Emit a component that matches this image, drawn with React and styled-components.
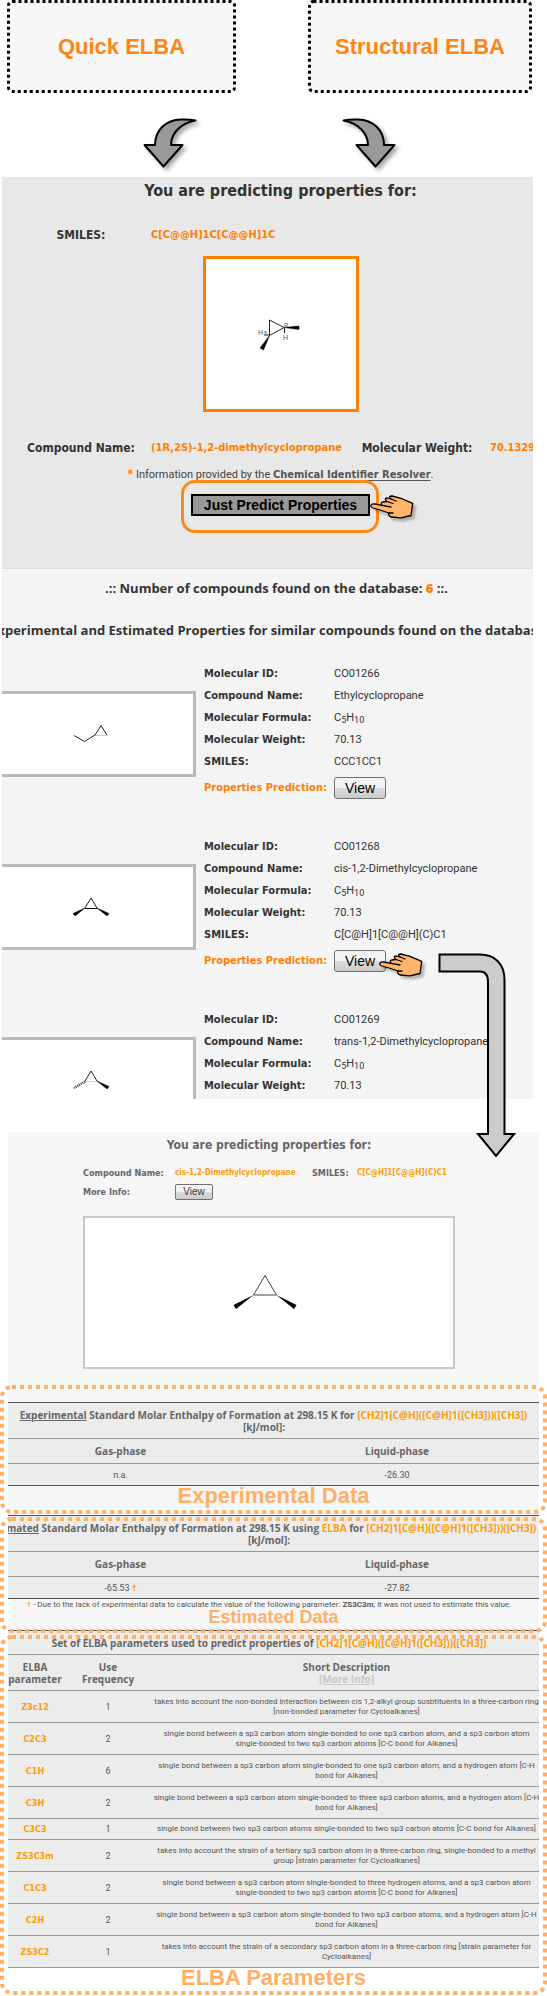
import React from 'react';
import styled, { createGlobalStyle, css } from 'styled-components';

const GlobalStyle = createGlobalStyle`
  *, *::before, *::after { box-sizing: border-box; }
  body { margin: 0; background: #fff; }
  h1, h2, h3, p, dl, dd { margin: 0; }
`;

const label = '"DejaVu Sans Condensed", Tahoma, sans-serif';
const value = 'Roboto, Tahoma, sans-serif';
const heading = '"Open Sans", Tahoma, sans-serif';
const display = '"Liberation Sans", Arial, sans-serif';
const orange = '#ff7f00';
const amber = '#ff9c05';
const peach = '#ffb066';

const Page = styled.main`
  display: flex;
  flex-direction: column;
  width: 100%;
  overflow: hidden;
  padding-bottom: 1px;
`;

/* Entry points */

const Modes = styled.div`
  display: flex;
  gap: 72px;
  padding: 0 15px 0 7px;
`;

const ModeCard = styled.section`
  position: relative;
  flex: ${(p) => p.$grow} 1 0;
  display: flex;
  align-items: center;
  justify-content: center;
  height: 93px;
  background: #f7f7f7;
  border-radius: 5px;
`;

const ModeTitle = styled.h1`
  font: bold 22px/26px ${display};
  color: #ff8512;
`;

const FrameLayer = styled.span`
  position: absolute;
  z-index: 1;
  inset: ${(p) => p.$inset || '0'};
  pointer-events: none;

  svg {
    display: block;
    width: 100%;
    height: 100%;
    overflow: visible;
  }

  rect {
    x: ${(p) => p.$stroke / 2}px;
    y: ${(p) => p.$stroke / 2}px;
    width: calc(100% - ${(p) => p.$stroke}px);
    height: calc(100% - ${(p) => p.$stroke}px);
    rx: ${(p) => p.$radius}px;
    fill: none;
    stroke: ${(p) => p.$color};
    stroke-width: ${(p) => p.$stroke}px;
    stroke-dasharray: ${(p) => p.$stroke} ${(p) => p.$stroke};
  }
`;

const DottedFrame = (props) => (
  <FrameLayer aria-hidden="true" {...props}>
    <svg>
      <rect />
    </svg>
  </FrameLayer>
);

const ArrowRow = styled.div`
  display: flex;
  justify-content: center;
  gap: 135px;
  padding: 23px 8px 7px 0;
`;

const CurvedArrowSvg = styled.svg`
  width: 62px;
  height: 54px;
  filter: drop-shadow(3px 3px 2px rgba(0, 0, 0, 0.35));
  path {
    fill: #999;
    stroke: #000;
    stroke-width: 2px;
    stroke-linejoin: round;
  }
`;

const CurvedArrow = ({ mirrored }) => (
  <CurvedArrowSvg viewBox="0 0 62 54" aria-hidden="true">
    <path
      transform={mirrored ? 'translate(62 0) scale(-1 1)' : undefined}
      d="M15 29 C15 14 26 4 41 3.500 Q49 3.200 55.500 4.500 C41 7 31 17 31 29 H42.500 L23.500 50.500 L4.500 29 Z"
    />
  </CurvedArrowSvg>
);

/* Query panel */

const QueryPanel = styled.section`
  margin: 0 14px 0 2px;
  overflow: hidden;
  background: #e8e8e8;
  border-bottom: 1px solid #dcdcdc;
`;

const QueryBody = styled.div`
  display: flex;
  flex-direction: column;
  align-items: center;
  width: calc(100% + 26px);
  padding: 4px 0 52px;
`;

const QueryTitle = styled.h2`
  font: bold 16px/20px ${label};
  color: #333;
`;

const QueryFacts = styled.dl`
  align-self: stretch;
  display: grid;
  grid-template-columns: 112px 193px 118px auto;
  column-gap: 14px;
  padding-left: 23px;
  margin-top: ${(p) => (p.$first ? 24 : 26)}px;
  font: bold 12px/20px ${label};
  white-space: nowrap;

  dt { text-align: center; color: #333; }
  dd { font-size: 11px; color: ${orange}; }
`;

const Structure = styled.figure`
  width: 156px;
  height: 156px;
  margin: 11px 0 0;
  border: 3px solid ${orange};
  background: #fff;
  svg { display: block; width: 100%; height: 100%; }
`;

const Source = styled.p`
  height: 20px;
  margin-top: 7px;
  font: 11px/20px ${value};
  color: #444;
  i { color: ${orange}; font: bold 12px/16px ${label}; }
  a { font: bold 11px/16px ${label}; color: #555; text-underline-offset: 2px; }
`;

const PredictBox = styled.div`
  position: relative;
  margin-top: 9px;
`;

const PredictButton = styled.button`
  display: block;
  width: 179px;
  height: 22px;
  padding: 0;
  border: 2px solid #000;
  background: #999;
  color: #000;
  font: bold 14px/18px ${display};
`;

const Highlight = styled.span`
  position: absolute;
  inset: -14px -9px -17px -10px;
  border: 3px solid #ff8716;
  border-radius: 14px;
  pointer-events: none;
`;

const HandSvg = styled.svg`
  position: absolute;
  left: ${(p) => p.$left}px;
  top: ${(p) => p.$top}px;
  width: 44px;
  height: 28px;
  overflow: visible;
  pointer-events: none;
  filter: drop-shadow(3px 3px 1px rgba(0, 0, 0, 0.25));
  path {
    fill: #ffb36b;
    stroke: #000;
    stroke-width: 1.3;
    stroke-linejoin: round;
    stroke-linecap: round;
  }
`;

const Hand = ({ left, top }) => (
  <HandSvg viewBox="0 0 44 28" $left={left} $top={top} aria-hidden="true">
    <path d="M1 12 Q2 10.500 5 11 L12 12.300 Q10 10 12.500 9 L17 8.500 Q13.500 5.500 17 4.800 L21 6 Q18 3 22 3 L31 5.300 L42.700 10.300 L41 22.500 L31 24.800 L21 24 Q17.500 22 19 20 L10 17 L3 15 Q0 14 1 12 Z" />
    <path d="M12 12.300 L21 14 M17 8.500 L23 10.500 M21 6 L26 8 M19 20 L23 20" />
  </HandSvg>
);

/* Matching compounds */

const Results = styled.section`
  margin: 0 14px 0 2px;
  padding-top: 9px;
  overflow: hidden;
  background: #f4f4f4;
`;

const ResultHeading = styled.h2`
  margin: 0 -40px ${(p) => p.$after}px ${(p) => (p.$wide ? -40 : -22)}px;
  font: bold 13px/20px ${heading};
  text-align: center;
  white-space: nowrap;
  color: #333;
  b { color: ${orange}; }
`;

const Compound = styled.article`
  display: flex;
  gap: 8px;
  height: 140px;
  margin-bottom: 33px;
  ${(p) => p.$cut && css`
    height: 90px;
    margin-bottom: 0;
    overflow: hidden;
  `}
`;

const Thumb = styled.figure`
  flex: none;
  width: 194px;
  height: 86px;
  margin: 28px 0 0;
  border: 3px solid #bababa;
  border-left: 0;
  background: #fff;
  svg { display: block; width: 100%; height: 100%; }
`;

const Facts = styled.dl`
  flex: 1;
  display: grid;
  grid-template-columns: 130px 1fr;
  grid-template-rows: repeat(5, 22px) 30px;
  align-items: center;
  font: 11px/22px ${value};
  white-space: nowrap;
  color: #333;
  dt { font: bold 11px/22px ${label}; }
  dt.prediction { color: ${orange}; }
  dd { position: relative; }
  sub { font-size: 9px; line-height: 0; vertical-align: -2px; }
`;

const ViewButton = styled.button`
  display: block;
  width: ${(p) => (p.$small ? 38 : 52)}px;
  height: ${(p) => (p.$small ? 16 : 22)}px;
  padding: 0;
  border: 1px solid #707070;
  border-radius: ${(p) => (p.$small ? 2 : 3)}px;
  background: linear-gradient(#f3f3f3 0 48%, #dcdcdc 52%, #cbcbcb);
  color: ${(p) => (p.$small ? '#333' : '#000')};
  font: ${(p) => (p.$small ? '10px/14px' : '14px/20px')} ${display};
`;

const bond = { fill: 'none', stroke: '#222', strokeWidth: 1 };

const Ethyl = () => (
  <svg viewBox="0 0 191 80" aria-hidden="true">
    <path {...bond} d="M72 41.500 L82.500 47.500 L93 41 L99 31.500 L105 41" />
    <path {...bond} stroke="#ccc" d="M93 41.500 H105" />
  </svg>
);

const Dimethyl = ({ hashed }) => (
  <svg viewBox="0 0 191 80" aria-hidden="true">
    <path {...bond} d="M83 41 L89 31 L95 41" />
    <path {...bond} stroke={hashed ? '#ccc' : '#000'} d="M83 41.500 H95" />
    <path d="M95 41 L105 49 L107 46.500 Z" stroke="#000" strokeWidth="0.5" />
    {hashed ? (
      <path d="M83 41.500 L72 48" stroke="#333" strokeWidth="2.500" strokeDasharray="1 1" />
    ) : (
      <path d="M83 41 L73 49 L71 46.500 Z" stroke="#000" strokeWidth="0.5" />
    )}
  </svg>
);

const compounds = [
  { id: 'CO01266', name: 'Ethylcyclopropane', smiles: 'CCC1CC1', art: <Ethyl /> },
  { id: 'CO01268', name: 'cis-1,2-Dimethylcyclopropane', smiles: 'C[C@H]1[C@@H](C)C1', art: <Dimethyl />, pointed: true },
  { id: 'CO01269', name: 'trans-1,2-Dimethylcyclopropane', art: <Dimethyl hashed />, cut: true },
];

/* Prediction report */

const Report = styled.section`
  position: relative;
  margin: 33px 8px 0;
`;

const ReportHead = styled.div`
  padding: 5px 9px 16px 0;
  background: #f6f6f6;
`;

const ReportTitle = styled.h2`
  font: bold 12px/16px ${label};
  text-align: center;
  color: #666;
`;

const ReportFacts = styled.dl`
  display: grid;
  grid-template-columns: 92px 137px 45px auto;
  grid-template-rows: 12px 16px;
  row-gap: 5px;
  align-items: center;
  margin: 14px 0 16px;
  padding-left: 75px;
  font: bold 9px/12px ${label};
  white-space: nowrap;
  color: #666;
  dd { font-size: 8px; color: ${amber}; }
`;

const ReportStructure = styled.figure`
  height: 153px;
  margin: 0 75px;
  border: 2px solid #c8c8c8;
  background: #fff;
  svg { display: block; width: 100%; height: 100%; }
`;

const FlowArrowSvg = styled.svg`
  position: absolute;
  top: -179px;
  right: 23px;
  width: 78px;
  height: 206px;
  path { fill: #ccc; stroke: #000; stroke-width: 2px; }
`;

const ReportSection = styled.section`
  position: relative;
  padding-top: ${(p) => p.$top || 0}px;
  padding-bottom: ${(p) => p.$bottom}px;
  background: ${(p) => (p.$plain ? '#fff' : '#f6f6f6')};
`;

const SectionName = styled.h3`
  font: bold ${(p) => (p.$small ? '18px/14px' : '22px/20px')} ${display};
  text-align: center;
  color: ${peach};
`;

const Grid = styled.table`
  width: 100%;
  table-layout: fixed;
  border-collapse: separate;
  border-spacing: 0;
  border-top: 1px solid #555;
  background: #ececec;
  color: #555;
  text-align: center;
  font: 8px/10px ${value};

  th, td {
    padding: 0;
    border-bottom: 1px solid #999;
    white-space: nowrap;
    overflow: hidden;
  }
  thead th { font: bold 10px/12px ${heading}; color: #666; }
  tbody th { font: bold 9px/10px ${label}; color: ${amber}; }
`;

const TitleCell = styled.th`
  height: ${(p) => p.$h}px;
`;

const HeadCell = styled.th`
  height: ${(p) => p.$h || 25}px;
  && { padding-left: ${(p) => p.$indent || 0}px; }
  a { color: #c8c8c8; }
`;

const ValueCell = styled.td`
  height: 22px;
  font-size: 9px;
  && { padding-left: ${(p) => p.$indent || 0}px; border-color: #555; }
  i { color: ${amber}; font-style: normal; }
`;

const DataCell = styled.td`
  height: ${(p) => (p.$single ? 21 : 32)}px;
  font-size: ${(p) => (p.$count ? 9 : 8)}px;
`;

const Line = styled.span`
  display: block;
  margin: 0 -30px;
  padding-right: ${(p) => p.$trail || 0}px;
  em { color: ${amber}; font-style: normal; }
`;

const Footnote = styled.p`
  height: 11px;
  padding: 1px 9px 0 0;
  font: 8px/10px ${value};
  text-align: center;
  white-space: nowrap;
  color: #555;
  i { color: ${amber}; font-style: normal; }
`;

const species = '[CH2]1[C@H]([C@H]1([CH3]))([CH3])';

const EnthalpyTable = ({ children, unitTrail, gas, liquid }) => (
  <Grid>
    <colgroup>
      <col width="225" />
      <col />
    </colgroup>
    <thead>
      <tr>
        <TitleCell colSpan="2" $h={36}>
          {children}
          <Line $trail={unitTrail}>[kJ/mol]:</Line>
        </TitleCell>
      </tr>
      <tr>
        <HeadCell>Gas-phase</HeadCell>
        <HeadCell $indent={22}>Liquid-phase</HeadCell>
      </tr>
    </thead>
    <tbody>
      <tr>
        <ValueCell>{gas}</ValueCell>
        <ValueCell $indent={22}>{liquid}</ValueCell>
      </tr>
    </tbody>
  </Grid>
);

const parameters = [
  ['Z3c12', 1, 'takes into account the non-bonded interaction between cis 1,2-alkyl group susbtituents in a three-carbon ring', '[non-bonded parameter for Cycloalkanes]'],
  ['C2C3', 2, 'single bond between a sp3 carbon atom single-bonded to one sp3 carbon atom, and a sp3 carbon atom', 'single-bonded to two sp3 carbon atoms [C-C bond for Alkanes]'],
  ['C1H', 6, 'single bond between a sp3 carbon atom single-bonded to one sp3 carbon atom, and a hydrogen atom [C-H', 'bond for Alkanes]'],
  ['C3H', 2, 'single bond between a sp3 carbon atom single-bonded to three sp3 carbon atoms, and a hydrogen atom [C-H', 'bond for Alkanes]'],
  ['C3C3', 1, 'single bond between two sp3 carbon atoms single-bonded to two sp3 carbon atoms [C-C bond for Alkanes]'],
  ['ZS3C3m', 2, 'takes into account the strain of a tertiary sp3 carbon atom in a three-carbon ring, single-bonded to a methyl', 'group [strain parameter for Cycloalkanes]'],
  ['C1C3', 2, 'single bond between a sp3 carbon atom single-bonded to three hydrogen atoms, and a sp3 carbon atom', 'single-bonded to two sp3 carbon atoms [C-C bond for Alkanes]'],
  ['C2H', 2, 'single bond between a sp3 carbon atom single-bonded to two sp3 carbon atoms, and a hydrogen atom [C-H', 'bond for Alkanes]'],
  ['ZS3C2', 1, 'takes into account the strain of a secondary sp3 carbon atom in a three-carbon ring [strain parameter for', 'Cycloalkanes]'],
];

const modes = [
  { name: 'Quick ELBA', grow: 229 },
  { name: 'Structural ELBA', grow: 224 },
];

export default function App() {
  return (
    <Page>
      <GlobalStyle />
      <Modes>
        {modes.map((mode) => (
          <ModeCard key={mode.name} $grow={mode.grow}>
            <DottedFrame $stroke={3} $radius={4} $color="#000" />
            <ModeTitle>{mode.name}</ModeTitle>
          </ModeCard>
        ))}
      </Modes>
      <ArrowRow>
        <CurvedArrow />
        <CurvedArrow mirrored />
      </ArrowRow>

      <QueryPanel>
        <QueryBody>
          <QueryTitle>You are predicting properties for:</QueryTitle>
          <QueryFacts $first>
            <dt>SMILES:</dt>
            <dd>C[C@@H]1C[C@@H]1C</dd>
          </QueryFacts>
          <Structure>
            <svg viewBox="0 0 150 150" aria-hidden="true">
              <path {...bond} d="M63.500 61 V76.500 L78 68.500 Z" />
              <path d="M78 68.500 L93 67 V70.500 Z" stroke="#000" strokeWidth="0.5" />
              <path d="M63.500 76.500 L57.500 91 L54 89 Z" stroke="#000" strokeWidth="0.5" />
              <path {...bond} d="M78.500 69 V74 M63 76 H58" />
              <g fill="#2f5f5f" fontFamily="Liberation Sans" fontSize="7">
                <text x="77" y="81">H</text>
                <text x="52" y="76">H</text>
                <text x="58" y="75" fontSize="6">s</text>
                <text x="78" y="68" fontSize="6">R</text>
              </g>
            </svg>
          </Structure>
          <QueryFacts>
            <dt>Compound Name:</dt>
            <dd>(1R,2S)-1,2-dimethylcyclopropane</dd>
            <dt>Molecular Weight:</dt>
            <dd>70.1329</dd>
          </QueryFacts>
          <Source>
            <i>*</i> Information provided by the <a href="#resolver">Chemical Identifier Resolver</a>.
          </Source>
          <PredictBox>
            <PredictButton type="button">Just Predict Properties</PredictButton>
            <Highlight />
            <Hand left={179} top={-1} />
          </PredictBox>
        </QueryBody>
      </QueryPanel>

      <Results>
        <ResultHeading $after={22}>
          .:: Number of compounds found on the database: <b>6</b> ::.
        </ResultHeading>
        <ResultHeading $wide $after={23}>
          Experimental and Estimated Properties for similar compounds found on the database
        </ResultHeading>
        {compounds.map((c) => (
          <Compound key={c.id} $cut={c.cut}>
            <Thumb>{c.art}</Thumb>
            <Facts>
              <dt>Molecular ID:</dt>
              <dd>{c.id}</dd>
              <dt>Compound Name:</dt>
              <dd>{c.name}</dd>
              <dt>Molecular Formula:</dt>
              <dd>C<sub>5</sub>H<sub>10</sub></dd>
              <dt>Molecular Weight:</dt>
              <dd>70.13</dd>
              {!c.cut && (
                <>
                  <dt>SMILES:</dt>
                  <dd>{c.smiles}</dd>
                  <dt className="prediction">Properties Prediction:</dt>
                  <dd>
                    <ViewButton type="button">View</ViewButton>
                    {c.pointed && <Hand left={45} top={1} />}
                  </dd>
                </>
              )}
            </Facts>
          </Compound>
        ))}
      </Results>

      <Report>
        <ReportHead>
          <ReportTitle>You are predicting properties for:</ReportTitle>
          <ReportFacts>
            <dt>Compound Name:</dt>
            <dd>cis-1,2-Dimethylcyclopropane</dd>
            <dt>SMILES:</dt>
            <dd>C[C@H]1[C@@H](C)C1</dd>
            <dt>More Info:</dt>
            <dd>
              <ViewButton type="button" $small>View</ViewButton>
            </dd>
          </ReportFacts>
          <ReportStructure>
            <svg viewBox="0 0 368 149" aria-hidden="true">
              <path {...bond} stroke="#444" d="M168.500 77 L180 57.500 L191.500 77 Z" />
              <path d="M168.500 77 L151 91 L148.500 87 Z M191.500 77 L209 91 L211.500 87 Z" />
            </svg>
          </ReportStructure>
        </ReportHead>

        <ReportSection $top={17} $bottom={9}>
          <EnthalpyTable unitTrail={19} gas="n.a." liquid="-26.30">
            <Line>
              <u>Experimental</u> Standard Molar Enthalpy of Formation at 298.15 K for <em>{species}</em>
            </Line>
          </EnthalpyTable>
          <SectionName>Experimental Data</SectionName>
          <DottedFrame $stroke={4} $radius={10} $color={peach} $inset="0 -8px 1px" />
        </ReportSection>

        <ReportSection $bottom={6}>
          <EnthalpyTable unitTrail={9} gas={<>-65.53 <i>†</i></>} liquid="-27.82">
            <Line $trail={22}>
              <u>Estimated</u> Standard Molar Enthalpy of Formation at 298.15 K using <em>ELBA</em> for <em>{species}</em>
            </Line>
          </EnthalpyTable>
          <Footnote>
            <i>†</i> - Due to the lack of experimental data to calculate the value of the following parameter: <b>ZS3C3m</b>, it was not used to estimate this value.
          </Footnote>
          <SectionName $small>Estimated Data</SectionName>
          <DottedFrame $stroke={4} $radius={10} $color={peach} $inset="2px -8px -3px" />
        </ReportSection>

        <ReportSection $plain $bottom={7}>
          <Grid>
            <colgroup>
              <col width="54" />
              <col width="92" />
              <col />
            </colgroup>
            <thead>
              <tr>
                <TitleCell colSpan="3" $h={24}>
                  <Line $trail={9}>
                    Set of ELBA parameters used to predict properties of <em>{species}</em>
                  </Line>
                </TitleCell>
              </tr>
              <tr>
                <HeadCell $h={36}>ELBA<br />parameter</HeadCell>
                <HeadCell $h={36}>Use<br />Frequency</HeadCell>
                <HeadCell $h={36}>Short Description<br /><a href="#parameters">[More Info]</a></HeadCell>
              </tr>
            </thead>
            <tbody>
              {parameters.map(([name, count, ...lines]) => (
                <tr key={name}>
                  <th scope="row">{name}</th>
                  <DataCell $count $single={lines.length === 1}>{count}</DataCell>
                  <DataCell $single={lines.length === 1}>
                    {lines.map((line) => <Line key={line}>{line}</Line>)}
                  </DataCell>
                </tr>
              ))}
            </tbody>
          </Grid>
          <SectionName>ELBA Parameters</SectionName>
          <DottedFrame $stroke={4} $radius={10} $color={peach} $inset="5px -8px 0" />
        </ReportSection>

        <FlowArrowSvg viewBox="438 953 78 206" aria-hidden="true">
          <path d="M439.500 954.500 H480 C495 954.500 504.500 964 504.500 980 V1134 H514 L496 1156 L478 1134 H488 V982 C488 975 485 971.500 480 971.500 H439.500 Z" />
        </FlowArrowSvg>
      </Report>
    </Page>
  );
}
